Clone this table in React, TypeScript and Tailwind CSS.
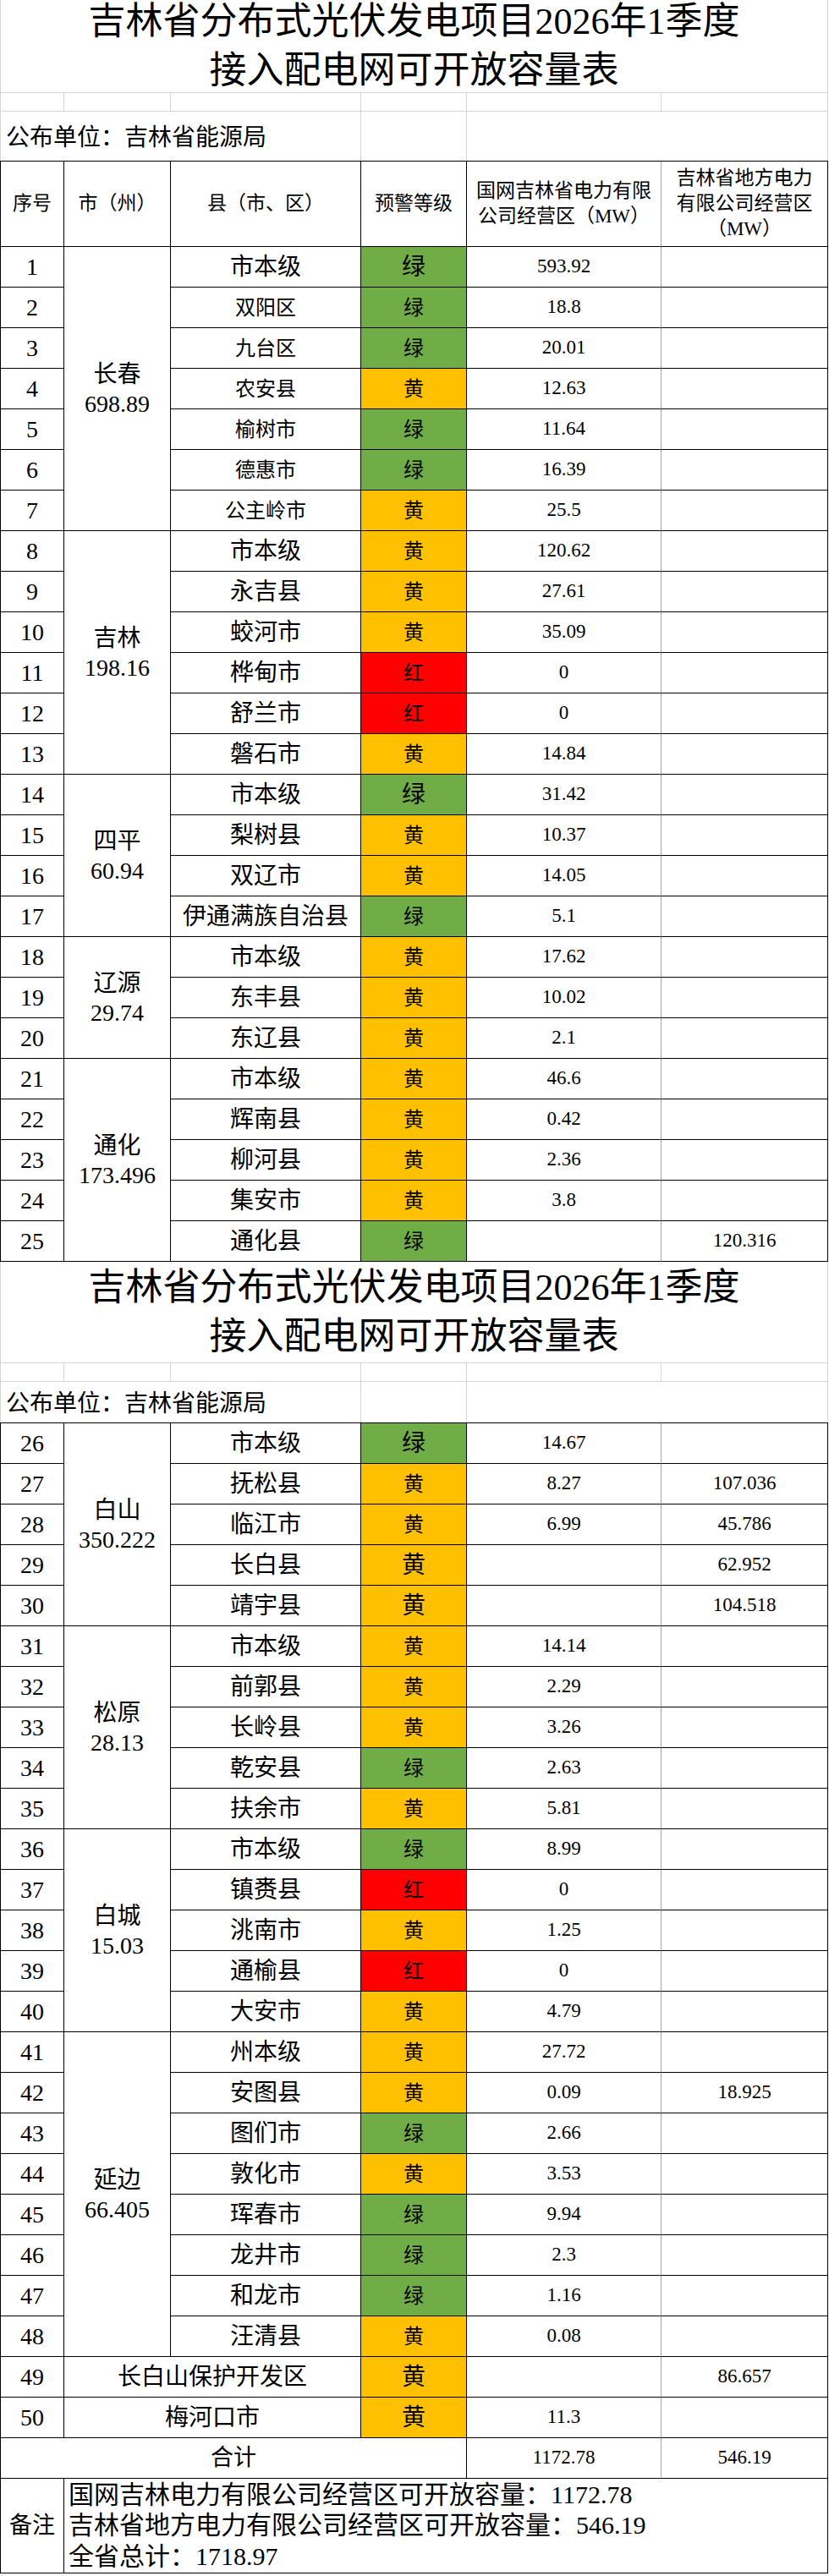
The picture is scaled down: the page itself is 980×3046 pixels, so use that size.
type Warn = "绿" | "黄" | "红";
type Row = [number, string, Warn, string, string];
type Group = { city: string; total: string; rows: Row[] };

const COLS = "grid grid-cols-[75px_126px_225px_125px_230px_197px]";

const table1: Group[] = [
  {
    city: "长春",
    total: "698.89",
    rows: [
      [1, "市本级", "绿", "593.92", ""],
      [2, "双阳区", "绿", "18.8", ""],
      [3, "九台区", "绿", "20.01", ""],
      [4, "农安县", "黄", "12.63", ""],
      [5, "榆树市", "绿", "11.64", ""],
      [6, "德惠市", "绿", "16.39", ""],
      [7, "公主岭市", "黄", "25.5", ""],
    ],
  },
  {
    city: "吉林",
    total: "198.16",
    rows: [
      [8, "市本级", "黄", "120.62", ""],
      [9, "永吉县", "黄", "27.61", ""],
      [10, "蛟河市", "黄", "35.09", ""],
      [11, "桦甸市", "红", "0", ""],
      [12, "舒兰市", "红", "0", ""],
      [13, "磐石市", "黄", "14.84", ""],
    ],
  },
  {
    city: "四平",
    total: "60.94",
    rows: [
      [14, "市本级", "绿", "31.42", ""],
      [15, "梨树县", "黄", "10.37", ""],
      [16, "双辽市", "黄", "14.05", ""],
      [17, "伊通满族自治县", "绿", "5.1", ""],
    ],
  },
  {
    city: "辽源",
    total: "29.74",
    rows: [
      [18, "市本级", "黄", "17.62", ""],
      [19, "东丰县", "黄", "10.02", ""],
      [20, "东辽县", "黄", "2.1", ""],
    ],
  },
  {
    city: "通化",
    total: "173.496",
    rows: [
      [21, "市本级", "黄", "46.6", ""],
      [22, "辉南县", "黄", "0.42", ""],
      [23, "柳河县", "黄", "2.36", ""],
      [24, "集安市", "黄", "3.8", ""],
      [25, "通化县", "绿", "", "120.316"],
    ],
  },
];

const table2: Group[] = [
  {
    city: "白山",
    total: "350.222",
    rows: [
      [26, "市本级", "绿", "14.67", ""],
      [27, "抚松县", "黄", "8.27", "107.036"],
      [28, "临江市", "黄", "6.99", "45.786"],
      [29, "长白县", "黄", "", "62.952"],
      [30, "靖宇县", "黄", "", "104.518"],
    ],
  },
  {
    city: "松原",
    total: "28.13",
    rows: [
      [31, "市本级", "黄", "14.14", ""],
      [32, "前郭县", "黄", "2.29", ""],
      [33, "长岭县", "黄", "3.26", ""],
      [34, "乾安县", "绿", "2.63", ""],
      [35, "扶余市", "黄", "5.81", ""],
    ],
  },
  {
    city: "白城",
    total: "15.03",
    rows: [
      [36, "市本级", "绿", "8.99", ""],
      [37, "镇赉县", "红", "0", ""],
      [38, "洮南市", "黄", "1.25", ""],
      [39, "通榆县", "红", "0", ""],
      [40, "大安市", "黄", "4.79", ""],
    ],
  },
  {
    city: "延边",
    total: "66.405",
    rows: [
      [41, "州本级", "黄", "27.72", ""],
      [42, "安图县", "黄", "0.09", "18.925"],
      [43, "图们市", "绿", "2.66", ""],
      [44, "敦化市", "黄", "3.53", ""],
      [45, "珲春市", "绿", "9.94", ""],
      [46, "龙井市", "绿", "2.3", ""],
      [47, "和龙市", "绿", "1.16", ""],
      [48, "汪清县", "黄", "0.08", ""],
    ],
  },
];

const spans: Record<number, string> = {
  3: "row-span-3",
  4: "row-span-4",
  5: "row-span-5",
  6: "row-span-6",
  7: "row-span-7",
  8: "row-span-8",
};

const warnBg: Record<Warn, string> = {
  绿: "bg-[#70ad47]",
  黄: "bg-[#ffc000]",
  红: "bg-[#ff0000]",
};

// rows whose warning text is set larger in the sheet
const bigWarn = [1, 14, 26, 29, 30, 49, 50];

const cell = "flex items-center justify-center border-r border-b border-black text-center";
const capCell = "flex items-center justify-center border-b border-b-black border-r border-r-[#a6a6a6] text-[23px]";

function Title({ tall }: { tall?: boolean }) {
  return (
    <div
      className={`flex flex-col items-center justify-center border-x border-b border-[#d4d4d4] text-[44px] leading-[58px] ${
        tall ? "h-[120px]" : "h-[110px]"
      }`}
    >
      <div>吉林省分布式光伏发电项目2026年1季度</div>
      <div>接入配电网可开放容量表</div>
    </div>
  );
}

function Publisher({ tall }: { tall?: boolean }) {
  return (
    <>
      <div className={`${COLS} h-[22px] border-l border-[#d4d4d4]`}>
        {[0, 1, 2, 3, 4, 5].map((i) => (
          <div key={i} className="border-r border-b border-[#d4d4d4]" />
        ))}
      </div>
      <div className={`${COLS} border-l border-[#d4d4d4] ${tall ? "h-[58px]" : "h-[48px]"}`}>
        <div className="col-span-3 flex items-center border-r border-[#d4d4d4] pl-[6px] pt-1 text-[28px]">
          公布单位：吉林省能源局
        </div>
        <div className="border-r border-[#d4d4d4]" />
        <div className="col-span-2 border-r border-[#d4d4d4]" />
      </div>
    </>
  );
}

function GroupRows({ g }: { g: Group }) {
  return (
    <>
      {g.rows.map(([n, county, warn, a, b], i) => (
        <div key={n} className="contents">
          <div className={`${cell} text-[28px]`}>{n}</div>
          {i === 0 && (
            <div className={`${cell} ${spans[g.rows.length]} flex-col text-[28px] leading-[35px]`}>
              <div>{g.city}</div>
              <div>{g.total}</div>
            </div>
          )}
          <div className={`${cell} ${n >= 2 && n <= 7 ? "text-[24px]" : "text-[28px]"}`}>{county}</div>
          <div className={`${cell} ${warnBg[warn]} ${bigWarn.includes(n) ? "text-[28px]" : "text-[24px]"}`}>{warn}</div>
          <div className={capCell}>{a}</div>
          <div className={`${cell} text-[23px]`}>{b}</div>
        </div>
      ))}
    </>
  );
}

export default function App() {
  return (
    <div className="w-[979px] bg-white text-black font-['Liberation_Serif','Noto_Sans_CJK_SC',serif]">
      <Title />
      <Publisher tall />

      {/* header */}
      <div className={`${COLS} h-[102px] border-l border-t border-black text-[23px] leading-[30px]`}>
        <div className={cell}>序号</div>
        <div className={cell}>市（州）</div>
        <div className={cell}>县（市、区）</div>
        <div className={cell}>预警等级</div>
        <div className={`${capCell} flex-col leading-[30px]`}>
          <div>国网吉林省电力有限</div>
          <div>公司经营区（MW）</div>
        </div>
        <div className={`${cell} flex-col`}>
          <div>吉林省地方电力</div>
          <div>有限公司经营区</div>
          <div>（MW）</div>
        </div>
      </div>

      <div className={`${COLS} auto-rows-[48px] border-l border-black`}>
        {table1.map((g) => (
          <GroupRows key={g.city} g={g} />
        ))}
      </div>

      <Title tall />
      <Publisher />

      <div className={`${COLS} auto-rows-[48px] border-l border-t border-black`}>
        {table2.map((g) => (
          <GroupRows key={g.city} g={g} />
        ))}

        <div className={`${cell} text-[28px]`}>49</div>
        <div className={`${cell} col-span-2 text-[28px]`}>长白山保护开发区</div>
        <div className={`${cell} ${warnBg["黄"]} text-[28px]`}>黄</div>
        <div className={capCell}></div>
        <div className={`${cell} text-[23px]`}>86.657</div>

        <div className={`${cell} text-[28px]`}>50</div>
        <div className={`${cell} col-span-2 text-[28px]`}>梅河口市</div>
        <div className={`${cell} ${warnBg["黄"]} text-[28px]`}>黄</div>
        <div className={capCell}>11.3</div>
        <div className={`${cell} text-[23px]`}></div>

        <div className={`${cell} col-span-4 text-[27px]`}>合计</div>
        <div className={capCell}>1172.78</div>
        <div className={`${cell} text-[23px]`}>546.19</div>
      </div>

      <div className="flex h-[112px] border-l border-black">
        <div className={`${cell} w-[75px] text-[27px]`}>备注</div>
        <div className="flex flex-1 flex-col justify-center whitespace-nowrap border-r border-b border-black pl-[5px] text-[30px] leading-[36.5px]">
          <div>国网吉林电力有限公司经营区可开放容量：1172.78</div>
          <div>吉林省地方电力有限公司经营区可开放容量：546.19</div>
          <div>全省总计：1718.97</div>
        </div>
      </div>
    </div>
  );
}
